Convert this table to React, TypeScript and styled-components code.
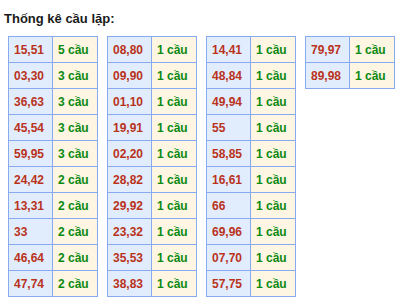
import React from "react";
import styled, { createGlobalStyle } from "styled-components";

type Pair = [string, number];

const columns: Pair[][] = [
  [
    ["15,51", 5],
    ["03,30", 3],
    ["36,63", 3],
    ["45,54", 3],
    ["59,95", 3],
    ["24,42", 2],
    ["13,31", 2],
    ["33", 2],
    ["46,64", 2],
    ["47,74", 2],
  ],
  [
    ["08,80", 1],
    ["09,90", 1],
    ["01,10", 1],
    ["19,91", 1],
    ["02,20", 1],
    ["28,82", 1],
    ["29,92", 1],
    ["23,32", 1],
    ["35,53", 1],
    ["38,83", 1],
  ],
  [
    ["14,41", 1],
    ["48,84", 1],
    ["49,94", 1],
    ["55", 1],
    ["58,85", 1],
    ["16,61", 1],
    ["66", 1],
    ["69,96", 1],
    ["07,70", 1],
    ["57,75", 1],
  ],
  [
    ["79,97", 1],
    ["89,98", 1],
  ],
];

const GlobalStyle = createGlobalStyle`
  body {
    margin: 0;
    background: #ffffff;
    font-family: "Liberation Sans", Arial, sans-serif;
  }
`;

const Wrapper = styled.div`
  padding: 11px 0 0 4px;
`;

const Title = styled.h3`
  margin: 0 0 9px;
  font-size: 13px;
  line-height: 16px;
  font-weight: bold;
  color: #1a1a1a;
`;

const Tables = styled.div`
  display: flex;
  align-items: flex-start;
  gap: 9px;
  padding-left: 4px;
`;

const Table = styled.table`
  width: 90px;
  border-collapse: collapse;
  table-layout: fixed;
`;

const Cell = styled.td<{ $kind: "pair" | "count" }>`
  height: 25px;
  padding: 0 0 0 5px;
  border: 1px solid #88aaee;
  font-size: 12px;
  font-weight: bold;
  white-space: nowrap;
  background: ${(p) => (p.$kind === "pair" ? "#e1edfd" : "#fef5e2")};
  color: ${(p) => (p.$kind === "pair" ? "#b9331c" : "#0b8a12")};
  width: ${(p) => (p.$kind === "pair" ? "38px" : "39px")};
`;

export default function App() {
  return (
    <Wrapper>
      <GlobalStyle />
      <Title>Thống kê cầu lặp:</Title>
      <Tables>
        {columns.map((col, i) => (
          <Table key={i}>
            <tbody>
              {col.map(([pair, count]) => (
                <tr key={pair}>
                  <Cell $kind="pair">{pair}</Cell>
                  <Cell $kind="count">{count} cầu</Cell>
                </tr>
              ))}
            </tbody>
          </Table>
        ))}
      </Tables>
    </Wrapper>
  );
}
